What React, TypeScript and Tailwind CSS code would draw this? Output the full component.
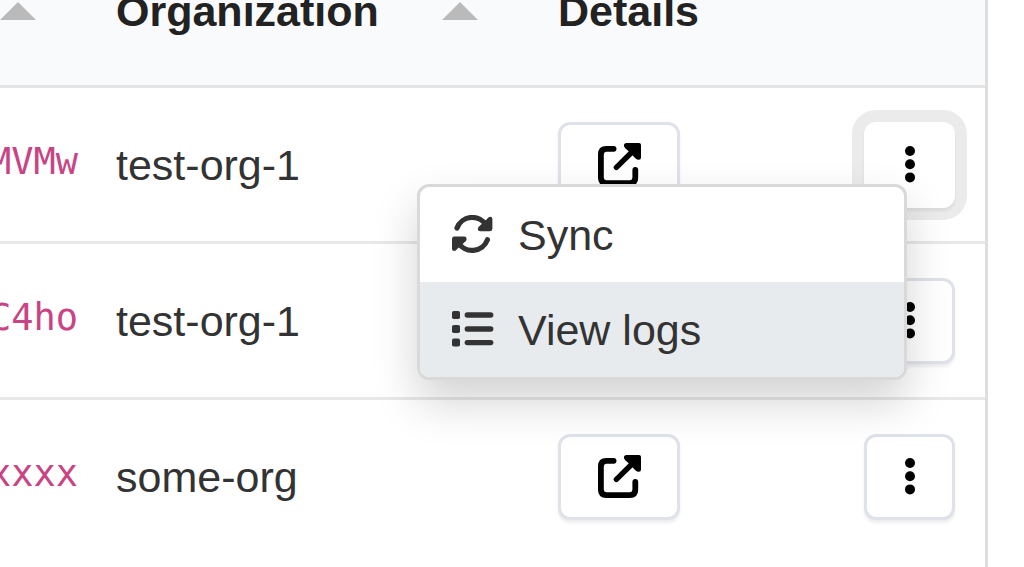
import React from "react";

type Row = { id: string; org: string; menuOpen?: boolean };

const rows: Row[] = [
  { id: "MVMw", org: "test-org-1", menuOpen: true },
  { id: "C4ho", org: "test-org-1" },
  { id: "xxxx", org: "some-org" },
];

function SortIcon() {
  return (
    <svg width="36" height="18" viewBox="0 0 36 18" className="shrink-0 fill-[#bababa]" aria-hidden="true">
      <path d="M18 0 36 18H0Z" />
    </svg>
  );
}

function OpenIcon() {
  return (
    <svg width="43" height="43" viewBox="0 0 43 43" fill="none" aria-hidden="true">
      <path
        d="M15.6 5.8H8.2Q2.9 5.8 2.9 11.2V34.8Q2.9 40.1 8.2 40.1H32Q37.3 40.1 37.3 34.8V27"
        stroke="black"
        strokeWidth="5.8"
        strokeLinecap="round"
      />
      <path d="M18.4 24.4 34 9" stroke="black" strokeWidth="5.4" strokeLinecap="round" />
      <path
        d="M28.2 0H41Q43 0 43 2V14.4Q43 17 40.6 16.8Q39 16.6 37.6 15.4L35.4 13.2 29.8 7.6 27.2 5.2Q25.4 3.4 26 1.6Q26.6 0 28.2 0Z"
        fill="black"
      />
    </svg>
  );
}

function DotsIcon() {
  return (
    <svg width="12" height="38" viewBox="0 0 12 38" aria-hidden="true">
      <circle cx="6" cy="5" r="5" />
      <circle cx="6" cy="18.2" r="5" />
      <circle cx="6" cy="31.4" r="5" />
    </svg>
  );
}

function SyncArrow() {
  return (
    <>
      <path d="M5 13A16.3 16.3 0 0 1 34.4 10.6" stroke="currentColor" strokeWidth="5.2" strokeLinecap="round" />
      <path
        d="M38.2 1.8Q40.4 1.8 40.4 4V13.8Q40.4 16.2 38 16.2H28.2Q25.8 16.2 25.8 13.9Q25.8 12.4 27 11.4L35 4Q36.8 1.8 38.2 1.8Z"
        fill="currentColor"
      />
    </>
  );
}

function SyncIcon() {
  return (
    <svg width="42" height="38" viewBox="0 0 42 38" fill="none" className="shrink-0 text-[#333]" aria-hidden="true">
      <SyncArrow />
      <g transform="rotate(180 20.2 18.9)">
        <SyncArrow />
      </g>
    </svg>
  );
}

function ListIcon() {
  return (
    <svg width="42" height="36" viewBox="0 0 42 36" className="shrink-0 fill-[#333]" aria-hidden="true">
      {[4, 18, 31.6].map((y) => (
        <g key={y}>
          <rect x="0" y={y - 4} width="8" height="8" rx="1.8" />
          <rect x="12.6" y={y - 2.7} width="28.8" height="5.4" rx="2.7" />
        </g>
      ))}
    </svg>
  );
}

const buttonBase = "flex h-[86px] items-center justify-center rounded-xl border-[3px] bg-white";
const headCell = "border-b-[3px] border-[#e5e5e5] p-0 pb-1 text-left";
const bodyCell = "border-b-[3px] border-[#e8e8e8] p-0 group-last:border-transparent";

function Menu() {
  return (
    <div
      role="menu"
      className="absolute top-[62px] right-12 z-10 w-[490px] overflow-hidden rounded-xl border-[3px] border-[#d9d9d9] bg-white shadow-[0_22px_45px_rgba(0,0,0,0.175)]"
    >
      <button type="button" role="menuitem" className="flex h-[95px] w-full items-center gap-6 pl-8 text-left">
        <SyncIcon />
        <span className="pt-0.5">Sync</span>
      </button>
      <button type="button" role="menuitem" className="flex h-[95px] w-full items-center gap-6 bg-[#e8ebee] pl-8 text-left">
        <ListIcon />
        <span className="pt-0.5">View logs</span>
      </button>
    </div>
  );
}

export default function App() {
  return (
    <main className="h-screen overflow-hidden bg-white pr-9 font-['Liberation_Sans',Arial,sans-serif] text-[43px] leading-[48px] text-[#333]">
      <div className="-mt-[60px] min-h-[calc(100vh+60px)] border-r-[3px] border-[#dedede]">
        <table className="w-full table-fixed border-separate border-spacing-0">
          <colgroup>
            <col className="w-[98px]" />
            <col className="w-[442px]" />
            <col />
            <col />
          </colgroup>
          <thead className="bg-[#f9fafc] text-[#222]">
            <tr className="h-[148px]">
              <th className={`${headCell} pr-[62px]`} aria-label="ID">
                <div className="flex justify-end">
                  <SortIcon />
                </div>
              </th>
              <th className={`${headCell} pr-[62px] pl-[18px]`}>
                <div className="flex items-center justify-between">
                  Organization
                  <SortIcon />
                </div>
              </th>
              <th className={`${headCell} pl-[18px]`}>Details</th>
              <th className={headCell} aria-label="Actions" />
            </tr>
          </thead>
          <tbody>
            {rows.map((row) => (
              <tr key={row.id} className="group h-[156px]">
                <td className={`${bodyCell} pr-5`}>
                  <div className="flex justify-end">
                    <code className="pb-1.5 font-['DejaVu_Sans_Mono',monospace] text-[37px] text-[#c94484]">{row.id}</code>
                  </div>
                </td>
                <td className={`${bodyCell} pl-[18px]`}>{row.org}</td>
                <td className={`${bodyCell} pl-[18px]`}>
                  <button
                    type="button"
                    aria-label="Open details"
                    className={`${buttonBase} w-[122px] border-[#dfe2e8] shadow-[0_3px_3px_rgba(0,0,0,0.07)]`}
                  >
                    <OpenIcon />
                  </button>
                </td>
                <td className={`${bodyCell} pr-[30px]`}>
                  <div className="relative flex justify-end">
                    <button
                      type="button"
                      aria-label="More actions"
                      aria-expanded={!!row.menuOpen}
                      className={
                        row.menuOpen
                          ? `${buttonBase} w-[91px] border-white shadow-[0_3px_3px_rgba(0,0,0,0.07),0_0_0_12px_#ebebeb]`
                          : `${buttonBase} w-[91px] border-[#dfe2e8] shadow-[0_3px_3px_rgba(0,0,0,0.07)]`
                      }
                    >
                      <DotsIcon />
                    </button>
                    {row.menuOpen && <Menu />}
                  </div>
                </td>
              </tr>
            ))}
          </tbody>
        </table>
      </div>
    </main>
  );
}
